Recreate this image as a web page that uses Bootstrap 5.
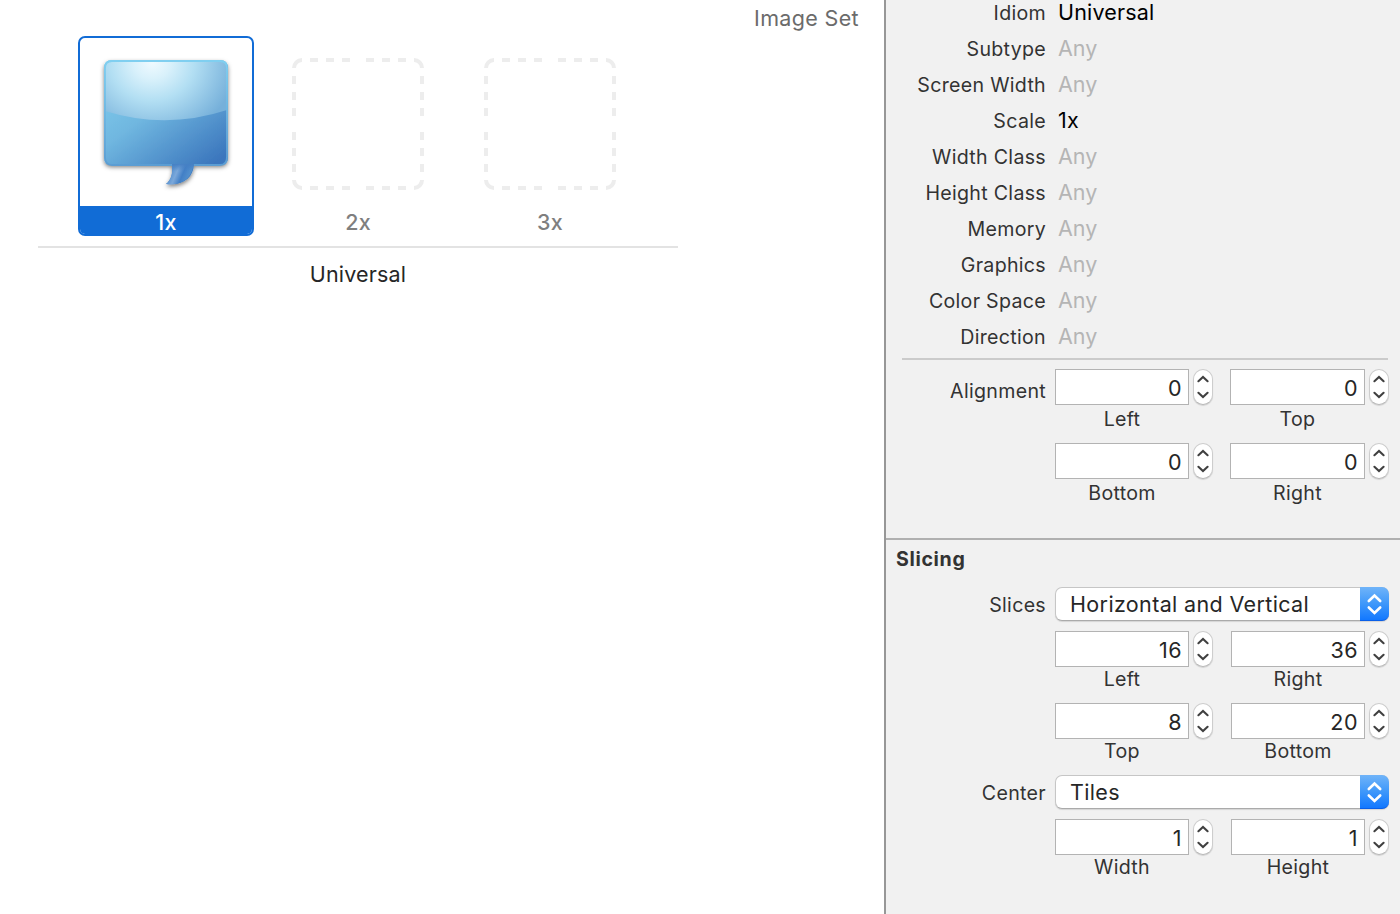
<!DOCTYPE html>
<html lang="en">
<head>
<meta charset="utf-8">
<meta name="viewport" content="width=device-width, initial-scale=1">
<title>Image Set</title>
<link href="https://cdn.jsdelivr.net/npm/bootstrap@5.3.0/dist/css/bootstrap.min.css" rel="stylesheet">
<style>
  body { font-family: Inter, Roboto, "Liberation Sans", sans-serif; font-size: 21.5px; line-height: 30px; color: #262626; letter-spacing: .18px; background: #fff; }
  .set-title { height: 36px; padding: 3px 25px 0 0; color: #6b6b6b; letter-spacing: .35px; }
  .image-set { width: 640px; margin-left: 38px; }
  .slots { gap: 16px; padding: 0 40px 10px; border-bottom: 2px solid #e3e3e3; }
  .slot { width: 176px; height: 200px; }
  .slot-art { height: 170px; }
  .empty-art { padding-top: 22px; }
  .slot-label { height: 30px; line-height: 32px; color: #7f7f7f; font-weight: 500; }
  .slot.active { background: #fff; border: 2px solid #116cd6; border-radius: 7px; overflow: hidden; }
  .slot.active .slot-art { height: 168px; }
  .slot.active .slot-label { color: #fff; background: #116cd6; height: 28px; }
  .set-name { margin-top: 11px; }

  .inspector { width: 516px; background: #f1f1f1; border-left: 2px solid #979797; }
  .alignment { height: 538px; }
  .attributes { margin-top: -5px; padding-bottom: 3px; }
  .attr { height: 36px; gap: 12px; }
  .attr-name { width: 160px; font-size: 19.6px; color: #333; letter-spacing: .3px; }
  .attr-value { color: #000; margin-top: -3px; }
  .attr-value.unset { color: #b5b5b5; letter-spacing: 0; }
  .rule { height: 2px; margin: 0 12px 9px 16px; background: #cbcbcb; }
  .fields { display: grid; grid-template-columns: 160px 334px; column-gap: 9px; }
  .fields > .attr-name { margin-top: 7px; }
  .slicing .fields > .attr-name { margin-top: 3px; }
  .pair { margin-bottom: 8px; }
  .pair.loose { margin-bottom: 10px; }
  .num { width: 158px; }
  .num.wide { width: 159px; }
  .num-box { height: 36px; min-width: 0; flex: 1 1 0; padding: 1px 6px 0 0; border: 1px solid #b3b3b3; line-height: 34px; text-align: right; color: #262626; background: #fff; letter-spacing: .5px; }
  .stepper { width: 20px; height: 36px; margin-left: 4px; padding: 0; border: 1px solid #cdcdcd; border-bottom-color: #b8b8b8; border-radius: 10px; background: #fff; box-shadow: 0 1px 1px rgba(0,0,0,.13); line-height: 0; }
  .stepper svg { margin: -1px; }
  .caption-text { font-size: 19.6px; line-height: 28px; height: 28px; margin-right: 24px; text-align: center; color: #333; letter-spacing: .3px; }
  .slicing { border-top: 2px solid #b0b0b0; }
  .slicing .caption-text { line-height: 24px; }
  .slicing h2 { font-size: 19.6px; line-height: 28px; font-weight: 700; color: #333; margin: 5px 0 14px 10px; letter-spacing: .65px; }
  .popup { height: 34px; padding: 0 0 0 14px; border: 1px solid #c6c6c6; border-bottom-color: #aaa; border-radius: 7px; background: #fff; margin-bottom: 10px; box-shadow: 0 1px 1px rgba(0,0,0,.12); line-height: 33px; letter-spacing: .36px; }
  .popup-arrows { width: 29px; height: 34px; margin: -1px; background: linear-gradient(#70b4f9, #3f98fa 50%, #1278ff); border-bottom: 1px solid #0a5fe8; border-radius: 0 7px 7px 0; line-height: 0; }
</style>
</head>
<body>
<svg width="0" height="0" class="position-absolute" aria-hidden="true">
  <symbol id="empty-slot" viewBox="0 0 132 132">
    <g fill="none" stroke="#ededed" stroke-width="4">
      <path d="M2 10A8 8 0 0 1 10 2M122 2A8 8 0 0 1 130 10M130 122A8 8 0 0 1 122 130M10 130A8 8 0 0 1 2 122"/>
      <path stroke-dasharray="8 8" d="M18 2H58M74 2H114M18 130H58M74 130H114M2 18V58M2 74V114M130 18V58M130 74V114"/>
    </g>
  </symbol>
  <symbol id="step" viewBox="0 0 20 36">
    <path d="M5.4 12.2 10 8 14.6 12.2M5.4 23.8 10 28 14.6 23.8" fill="none" stroke="#404040" stroke-width="2.1" stroke-linecap="round"/>
  </symbol>
  <symbol id="choose" viewBox="0 0 29 34">
    <path d="M8.8 14 14.5 8.5 20.2 14M8.8 20.5 14.5 26 20.2 20.5" fill="none" stroke="#fff" stroke-width="2.6" stroke-linecap="round"/>
  </symbol>
</svg>
<div class="d-flex vh-100 overflow-hidden">
  <main class="flex-grow-1">
    <div class="set-title text-end">Image Set</div>
    <section class="image-set">
      <div class="slots d-flex">
        <div class="slot active d-flex flex-column">
          <div class="slot-art">
            <svg class="d-block" width="172" height="168" viewBox="80 38 172 168">
              <defs>
                <linearGradient id="base" gradientUnits="userSpaceOnUse" x1="122" y1="80" x2="194" y2="178"><stop offset="0" stop-color="#7cc8ea"/><stop offset=".35" stop-color="#70b7e0"/><stop offset="1" stop-color="#3b76bd"/></linearGradient>
                <radialGradient id="gloss" gradientUnits="userSpaceOnUse" cx="152" cy="62" r="84" gradientTransform="translate(152 62) scale(1 .92) translate(-152 -62)"><stop offset="0" stop-color="#f0faff"/><stop offset=".22" stop-color="#d9f1fb"/><stop offset=".5" stop-color="#b3dff3"/><stop offset="1" stop-color="#76b0da"/></radialGradient>
                <linearGradient id="rim" x1="0" y1="0" x2="0" y2="1"><stop offset="0" stop-color="#80cff0"/><stop offset="1" stop-color="#5b9dd3"/></linearGradient>
                <linearGradient id="tail" gradientUnits="userSpaceOnUse" x1="171" y1="170" x2="190" y2="178"><stop offset="0" stop-color="#568fce"/><stop offset=".3" stop-color="#7ba8da"/><stop offset=".6" stop-color="#427fc6"/><stop offset="1" stop-color="#5794cf"/></linearGradient>
                <linearGradient id="fade" gradientUnits="userSpaceOnUse" x1="0" y1="159" x2="0" y2="171"><stop offset="0" stop-color="#4580c4"/><stop offset=".4" stop-color="#4580c4"/><stop offset="1" stop-color="#4580c4" stop-opacity="0"/></linearGradient>
                <filter id="shade" x="-10%" y="-10%" width="120%" height="125%"><feDropShadow dx="0" dy="2.2" stdDeviation="2" flood-color="#000" flood-opacity=".5"/></filter>
              </defs>
              <g filter="url(#shade)">
                <path d="M112 60H220Q228 60 228 68V157Q228 165 220 165H194C193 177 184 186 166 184C171 180 173 174 172 165H112Q104 165 104 157V68Q104 60 112 60Z" fill="url(#base)"/>
              </g>
              <path d="M172 164C173 174 171 180 166 184C184 186 192 177 193.5 164Z" fill="url(#tail)"/>
              <path d="M172 164C173 174 171 180 166 184C184 186 192 177 193.5 164Z" fill="url(#fade)"/>
              <path d="M112 61H220Q227 61 227 68V110Q166 130 105 111V68Q105 61 112 61Z" fill="url(#gloss)"/>
              <path d="M172 165H112Q105 165 105 157V68Q105 61 112 61H220Q227 61 227 68V157Q227 165 220 165H194" fill="none" stroke="url(#rim)" stroke-width="1.8"/>
            </svg>
          </div>
          <div class="slot-label text-center">1x</div>
        </div>
        <div class="slot">
          <div class="slot-art empty-art text-center lh-1"><svg width="132" height="132"><use href="#empty-slot"/></svg></div>
          <div class="slot-label text-center">2x</div>
        </div>
        <div class="slot">
          <div class="slot-art empty-art text-center lh-1"><svg width="132" height="132"><use href="#empty-slot"/></svg></div>
          <div class="slot-label text-center">3x</div>
        </div>
      </div>
      <div class="set-name text-center">Universal</div>
    </section>
  </main>

  <aside class="inspector flex-shrink-0">
    <section class="alignment d-flex flex-column">
      <div class="attributes">
        <div class="attr d-flex align-items-center"><div class="attr-name text-end">Idiom</div><div class="attr-value">Universal</div></div>
        <div class="attr d-flex align-items-center"><div class="attr-name text-end">Subtype</div><div class="attr-value unset">Any</div></div>
        <div class="attr d-flex align-items-center"><div class="attr-name text-end">Screen Width</div><div class="attr-value unset">Any</div></div>
        <div class="attr d-flex align-items-center"><div class="attr-name text-end">Scale</div><div class="attr-value">1x</div></div>
        <div class="attr d-flex align-items-center"><div class="attr-name text-end">Width Class</div><div class="attr-value unset">Any</div></div>
        <div class="attr d-flex align-items-center"><div class="attr-name text-end">Height Class</div><div class="attr-value unset">Any</div></div>
        <div class="attr d-flex align-items-center"><div class="attr-name text-end">Memory</div><div class="attr-value unset">Any</div></div>
        <div class="attr d-flex align-items-center"><div class="attr-name text-end">Graphics</div><div class="attr-value unset">Any</div></div>
        <div class="attr d-flex align-items-center"><div class="attr-name text-end">Color Space</div><div class="attr-value unset">Any</div></div>
        <div class="attr d-flex align-items-center"><div class="attr-name text-end">Direction</div><div class="attr-value unset">Any</div></div>
      </div>
      <div class="rule"></div>
      <div class="fields">
        <div class="attr-name text-end">Alignment</div>
        <div>
          <div class="pair loose d-flex justify-content-between">
            <div class="num"><div class="d-flex"><div class="num-box">0</div><div class="stepper"><svg width="20" height="36"><use href="#step"/></svg></div></div><div class="caption-text">Left</div></div>
            <div class="num wide"><div class="d-flex"><div class="num-box">0</div><div class="stepper"><svg width="20" height="36"><use href="#step"/></svg></div></div><div class="caption-text">Top</div></div>
          </div>
          <div class="pair d-flex justify-content-between">
            <div class="num"><div class="d-flex"><div class="num-box">0</div><div class="stepper"><svg width="20" height="36"><use href="#step"/></svg></div></div><div class="caption-text">Bottom</div></div>
            <div class="num wide"><div class="d-flex"><div class="num-box">0</div><div class="stepper"><svg width="20" height="36"><use href="#step"/></svg></div></div><div class="caption-text">Right</div></div>
          </div>
        </div>
      </div>
    </section>

    <section class="slicing">
      <h2>Slicing</h2>
      <div class="fields">
        <div class="attr-name text-end">Slices</div>
        <div>
          <div class="popup d-flex justify-content-between"><span>Horizontal and Vertical</span><span class="popup-arrows"><svg width="29" height="34"><use href="#choose"/></svg></span></div>
          <div class="pair d-flex justify-content-between">
            <div class="num"><div class="d-flex"><div class="num-box">16</div><div class="stepper"><svg width="20" height="36"><use href="#step"/></svg></div></div><div class="caption-text">Left</div></div>
            <div class="num"><div class="d-flex"><div class="num-box">36</div><div class="stepper"><svg width="20" height="36"><use href="#step"/></svg></div></div><div class="caption-text">Right</div></div>
          </div>
          <div class="pair d-flex justify-content-between">
            <div class="num"><div class="d-flex"><div class="num-box">8</div><div class="stepper"><svg width="20" height="36"><use href="#step"/></svg></div></div><div class="caption-text">Top</div></div>
            <div class="num"><div class="d-flex"><div class="num-box">20</div><div class="stepper"><svg width="20" height="36"><use href="#step"/></svg></div></div><div class="caption-text">Bottom</div></div>
          </div>
        </div>
        <div class="attr-name text-end">Center</div>
        <div>
          <div class="popup d-flex justify-content-between"><span>Tiles</span><span class="popup-arrows"><svg width="29" height="34"><use href="#choose"/></svg></span></div>
          <div class="pair d-flex justify-content-between">
            <div class="num"><div class="d-flex"><div class="num-box">1</div><div class="stepper"><svg width="20" height="36"><use href="#step"/></svg></div></div><div class="caption-text">Width</div></div>
            <div class="num"><div class="d-flex"><div class="num-box">1</div><div class="stepper"><svg width="20" height="36"><use href="#step"/></svg></div></div><div class="caption-text">Height</div></div>
          </div>
        </div>
      </div>
    </section>
  </aside>
</div>
<script src="https://cdn.jsdelivr.net/npm/bootstrap@5.3.0/dist/js/bootstrap.bundle.min.js"></script>
</body>
</html>
